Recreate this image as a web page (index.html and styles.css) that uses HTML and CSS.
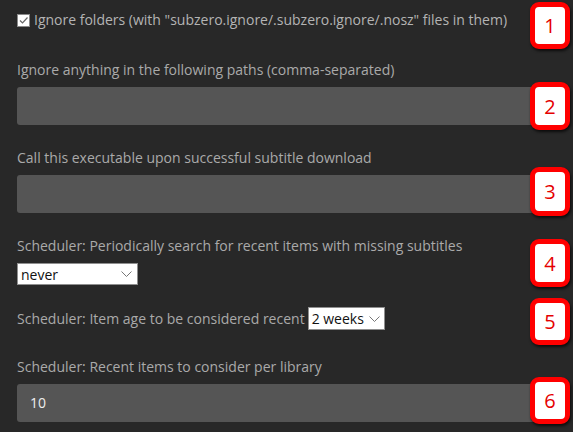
FILE: index.html
```html
<!DOCTYPE html>
<html>
<head>
<meta charset="utf-8">
<link rel="stylesheet" href="styles.css">
</head>
<body>
<div class="form">
  <div class="check-row">
    <span class="checkbox"><svg width="11" height="11" viewBox="0 0 11 11"><path d="M2 5.5 L4.5 8 L9.5 2.5" fill="none" stroke="#666" stroke-width="1.2"/></svg></span>
    <span class="check-label">Ignore folders (with "subzero.ignore/.subzero.ignore/.nosz" files in them)</span>
  </div>
  <div class="label l1">Ignore anything in the following paths (comma-separated)</div>
  <div class="input"></div>
  <div class="label l2">Call this executable upon successful subtitle download</div>
  <div class="input"></div>
  <div class="label l3">Scheduler: Periodically search for recent items with missing subtitles</div>
  <div class="select sel-never"><span>never</span><svg width="11" height="6" viewBox="0 0 11 6"><path d="M0.5 0.5 L5.5 5.5 L10.5 0.5" fill="none" stroke="#777" stroke-width="1"/></svg></div>
  <div class="inline-row">
    <span class="label-inline">Scheduler: Item age to be considered recent</span>
    <div class="select sel-weeks"><span>2 weeks</span><svg width="11" height="6" viewBox="0 0 11 6"><path d="M0.5 0.5 L5.5 5.5 L10.5 0.5" fill="none" stroke="#777" stroke-width="1"/></svg></div>
  </div>
  <div class="label l5">Scheduler: Recent items to consider per library</div>
  <div class="input value">10</div>
</div>
<div class="badge b1">1</div>
<div class="badge b2">2</div>
<div class="badge b3">3</div>
<div class="badge b4">4</div>
<div class="badge b5">5</div>
<div class="badge b6">6</div>
</body>
</html>
```
FILE: styles.css
```css
html, body {
  margin: 0;
  padding: 0;
  background: #282828;
  font-family: "Open Sans", "Liberation Sans", sans-serif;
  font-size: 14px;
  color: #aaa;
  width: 573px;
  height: 432px;
  overflow: hidden;
  position: relative;
}
.form {
  padding: 0 17px;
  display: flex;
  flex-direction: column;
  align-items: flex-start;
}
.check-row {
  margin-top: 11px;
  height: 18px;
  display: flex;
  align-items: center;
  gap: 4px;
}
.checkbox {
  width: 11px;
  height: 11px;
  background: #fff;
  border: 1px solid #8a8a8a;
  display: flex;
  align-items: center;
  justify-content: center;
}
.check-label { color: #b4b4b4; line-height: 18px; }
.label { line-height: 18px; }
.l1 { margin-top: 32px; }
.l2 { margin-top: 24px; }
.l3 { margin-top: 24px; }
.l5 { margin-top: 28px; }
.input {
  align-self: stretch;
  height: 38px;
  margin-top: 8px;
  background: #555;
  border-radius: 3px;
  box-sizing: border-box;
}
.input.value {
  color: #eee;
  line-height: 38px;
  padding-left: 13px;
}
.select {
  background: #fff;
  border: 1px solid #8f8f8f;
  box-sizing: border-box;
  display: flex;
  align-items: center;
  justify-content: space-between;
  color: #111;
  font-size: 14px;
}
.sel-never {
  margin-top: 8px;
  width: 121px;
  height: 22px;
  padding: 0 5px 0 3px;
}
.inline-row {
  margin-top: 22px;
  height: 23px;
  display: flex;
  align-items: center;
  gap: 3px;
}
.sel-weeks {
  width: 77px;
  height: 23px;
  padding: 0 4px 0 3px;
}
.badge {
  position: absolute;
  left: 530px;
  width: 40px;
  height: 47px;
  box-sizing: border-box;
  background: #fff;
  border: 5px solid #f00;
  border-radius: 9px;
  box-shadow: 1px 2px 3px rgba(0,0,0,0.7);
  color: #e50000;
  font-family: "Open Sans", "Liberation Sans", sans-serif;
  font-size: 20px;
  display: flex;
  align-items: center;
  justify-content: center;
}
.b1 { top: 2px; }
.b2 { top: 82px; height: 48px; }
.b3 { top: 167px; height: 49px; }
.b4 { top: 239px; height: 48px; }
.b5 { top: 298px; }
.b6 { top: 377px; }
```
